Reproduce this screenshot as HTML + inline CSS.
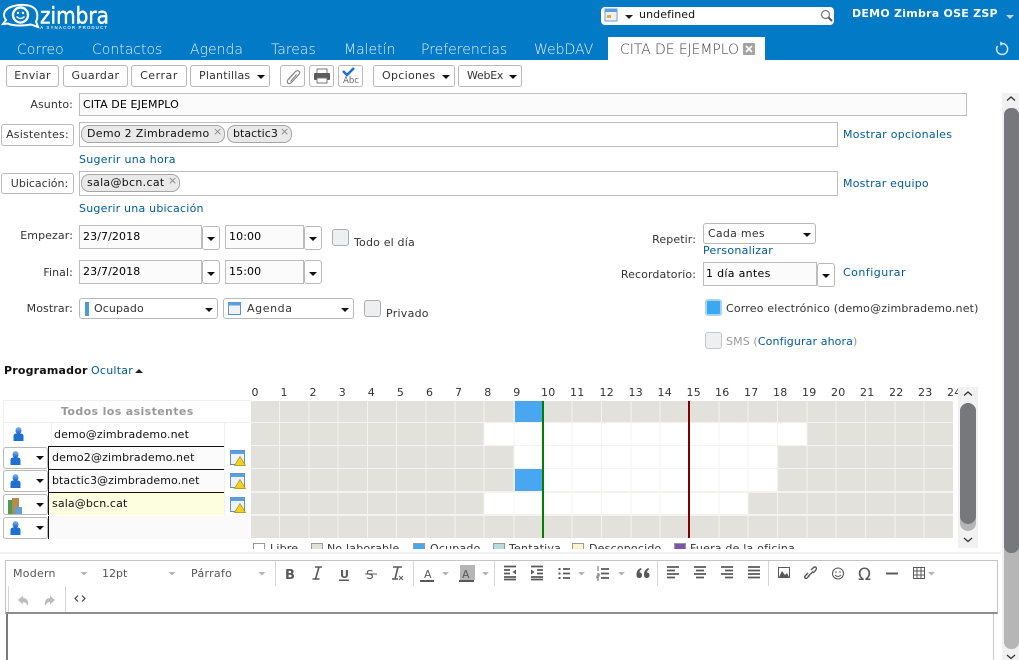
<!DOCTYPE html>
<html><head><meta charset="utf-8"><style>
html,body{margin:0;padding:0;width:1019px;height:660px;overflow:hidden;background:#fff}
body{position:relative;font-family:"DejaVu Sans",sans-serif;font-size:11px;letter-spacing:.1px;color:#333}
.a,.t,.b,.i,.l,.c{position:absolute;box-sizing:border-box}
.t{white-space:nowrap;line-height:16px;height:16px}
.l{white-space:nowrap;line-height:16px;height:16px;color:#005a95;letter-spacing:.27px}
.r{text-align:right;width:100px}
.b{background:#fff;border:1px solid #b9b9b9;border-radius:3px;text-align:center;white-space:nowrap;line-height:19px;letter-spacing:.3px}
.i{background:#fbfbfb;border:1px solid #bdbdbd;white-space:nowrap;color:#000;line-height:22px;padding-left:3px}
.c{width:17px;height:17px;background:#eeeff1;border:1px solid #aeaeae;border-radius:3px}
.bub{position:absolute;box-sizing:border-box;height:18px;top:2px;background:#e9e9e9;border:1px solid #a5a5a5;border-radius:8px;line-height:16px;padding-left:5px;color:#111;white-space:nowrap;letter-spacing:.3px}
.x{position:absolute;top:-1px;line-height:14px;color:#8a8a8a;font-size:11px;letter-spacing:0}
.d{position:absolute;width:0;height:0;border-left:4px solid transparent;border-right:4px solid transparent;border-top:4px solid #111}
.tab{position:absolute;top:41px;color:#e3f0f9;font-size:14px;letter-spacing:0;line-height:18px;white-space:nowrap;font-weight:200}
.lg{position:absolute;top:543px;width:12px;height:12px;box-sizing:border-box;border:1px solid #999}
.clip{position:absolute;left:0;top:0;width:1019px;height:549px;overflow:hidden}
.clip .t{letter-spacing:.2px}
</style></head><body>

<!-- header -->
<div class="a" style="left:0;top:0;width:1019px;height:60px;background:#027ac5"></div>
<svg class="a" style="left:0;top:0" width="125" height="34" viewBox="0 0 125 34">
<path d="M36 21.500L38 27 31 24.500C24 26 12 26 8 23.500L3 24 6 20C2 15 4 9 12 6.500C20 4 30 4.500 34 8C38 11 38 18 36 21.500Z" fill="none" stroke="#fff" stroke-width="2"/>
<circle cx="20.500" cy="15" r="7.500" fill="#027ac5" stroke="#fff" stroke-width="2.400"/>
<circle cx="18" cy="13" r="1.200" fill="#fff"/><circle cx="23" cy="13" r="1.200" fill="#fff"/>
<path d="M16.500 16.500Q20.500 20.500 24.500 16.500" fill="none" stroke="#fff" stroke-width="1.400"/>
<text x="40" y="23.500" fill="#fff" stroke="#fff" stroke-width=".5" font-family="DejaVu Sans,sans-serif" font-size="23" textLength="69" lengthAdjust="spacingAndGlyphs" letter-spacing="0">zimbra</text>
<text x="40" y="29" fill="#d6e9f6" font-family="Liberation Sans,sans-serif" font-size="4.500" font-weight="bold" textLength="67" letter-spacing="0">A SYNACOR PRODUCT</text>
</svg>

<div class="a" style="left:601px;top:7px;width:233px;height:18px;background:#fff;border-radius:4px"></div>
<svg class="a" style="left:604px;top:8px" width="16" height="16"><rect x="1" y="1" width="12" height="12" fill="#eef2f6" stroke="#6d9fd0"/><rect x="1" y="1" width="12" height="3" fill="#5c9ee0"/><rect x="3" y="7" width="4" height="3" fill="#f2a533"/></svg>
<div class="d" style="left:625px;top:15px;border-top-color:#222"></div>
<div class="t" style="left:639px;top:7px;color:#111">undefined</div>
<svg class="a" style="left:820px;top:9px" width="14" height="14"><circle cx="5.500" cy="5.500" r="4" fill="none" stroke="#777" stroke-width="1.200"/><path d="M8.500 8.500L12 12" stroke="#555" stroke-width="2"/></svg>
<div class="t" style="left:852px;top:6px;color:#fff;font-weight:bold;letter-spacing:.25px">DEMO Zimbra OSE ZSP</div>
<div class="d" style="left:1006px;top:15px;border-top-color:#bcd9ee"></div>

<div class="a" style="left:608px;top:37px;width:157px;height:23px;background:#fff"></div>
<div class="tab" style="left:17px">Correo</div>
<div class="tab" style="left:92px">Contactos</div>
<div class="tab" style="left:190px">Agenda</div>
<div class="tab" style="left:271px">Tareas</div>
<div class="tab" style="left:344px">Maletín</div>
<div class="tab" style="left:421px">Preferencias</div>
<div class="tab" style="left:534px">WebDAV</div>
<div class="tab" style="left:620px;color:#444;letter-spacing:-.08px">CITA DE EJEMPLO</div>
<svg class="a" style="left:742px;top:42px" width="14" height="14"><rect x="1" y="1" width="12" height="12" rx="1" fill="#a3a3a3"/><path d="M4 4L10 10M10 4L4 10" stroke="#fff" stroke-width="1.600"/></svg>
<svg class="a" style="left:994px;top:41px" width="16" height="16"><path d="M8 2.500A5.500 5.500 0 1 1 3.500 5" fill="none" stroke="#d5e8f5" stroke-width="1.500"/><path d="M6 0.500L9.500 2.500 6.500 5Z" fill="#d5e8f5"/></svg>

<!-- toolbar -->
<div class="b" style="left:6px;top:65px;width:53px;height:22px">Enviar</div>
<div class="b" style="left:63px;top:65px;width:65px;height:22px;letter-spacing:.45px">Guardar</div>
<div class="b" style="left:131px;top:65px;width:56px;height:22px;letter-spacing:.55px">Cerrar</div>
<div class="b" style="left:190px;top:65px;width:80px;height:22px;text-align:left;padding-left:8px;letter-spacing:.2px">Plantillas</div><div class="d" style="left:257px;top:75px"></div>
<div class="b" style="left:280px;top:65px;width:25px;height:22px"></div>
<div class="b" style="left:309px;top:65px;width:25px;height:22px"></div>
<div class="b" style="left:338px;top:65px;width:25px;height:22px"></div>
<svg class="a" style="left:284px;top:67px" width="18" height="18"><path d="M4.500 12.500L11.500 4.500C13 3 15 3.500 15.500 5S15 7.500 14 8.500L7 16C6 17 4 17 3.500 15.500S3.500 13 4.500 12L11 5M6.500 14.500L12.500 7.500" fill="none" stroke="#888" stroke-width="1.200"/></svg>
<svg class="a" style="left:312px;top:67px" width="20" height="18"><rect x="5" y="2" width="10" height="5" fill="#fff" stroke="#777"/><rect x="2" y="6" width="16" height="7" rx="1" fill="#5c5c5c"/><rect x="5" y="11" width="10" height="5" fill="#fff" stroke="#777"/></svg>
<svg class="a" style="left:340px;top:67px" width="20" height="18"><path d="M3 4L7 8 14 1" fill="none" stroke="#1a6fd0" stroke-width="2.500"/><text x="3" y="16" font-size="8.500" letter-spacing="0" fill="#666" font-family="DejaVu Sans,sans-serif">Abc</text></svg>
<div class="b" style="left:373px;top:65px;width:82px;height:22px;text-align:left;padding-left:8px">Opciones</div><div class="d" style="left:442px;top:75px"></div>
<div class="b" style="left:458px;top:65px;width:64px;height:22px;text-align:left;padding-left:8px;letter-spacing:-.25px">WebEx</div><div class="d" style="left:509px;top:75px"></div>

<!-- form -->
<div class="t r" style="left:-27px;top:97px">Asunto:</div>
<div class="i" style="left:79px;top:93px;width:888px;height:23px">CITA DE EJEMPLO</div>

<div class="b" style="left:1px;top:124px;width:73px;height:22px;letter-spacing:.2px">Asistentes:</div>
<div class="i" style="left:79px;top:122px;width:759px;height:25px;background:#fff"></div>
<div class="a" style="left:79px;top:123px;height:20px">
<div class="bub" style="left:2px;width:144px">Demo 2 Zimbrademo<span class="x" style="left:131px">×</span></div>
<div class="bub" style="left:148px;width:65px;letter-spacing:.05px">btactic3<span class="x" style="left:52px">×</span></div></div>
<div class="l" style="left:79px;top:152px">Sugerir una hora</div>
<div class="l" style="left:843px;top:127px">Mostrar opcionales</div>

<div class="b" style="left:1px;top:173px;width:73px;height:21px;letter-spacing:0;padding-left:4px">Ubicación:</div>
<div class="i" style="left:79px;top:171px;width:759px;height:25px;background:#fff"></div>
<div class="a" style="left:79px;top:172px;height:20px">
<div class="bub" style="left:2px;width:99px">sala@bcn.cat<span class="x" style="left:86px">×</span></div></div>
<div class="l" style="left:79px;top:201px;letter-spacing:.22px">Sugerir una ubicación</div>
<div class="l" style="left:843px;top:176px;letter-spacing:.2px">Mostrar equipo</div>

<div class="t r" style="left:-27px;top:228px">Empezar:</div>
<div class="i" style="left:79px;top:225px;width:123px;height:24px">23/7/2018</div>
<div class="b" style="left:202px;top:226px;width:18px;height:24px"></div><div class="d" style="left:207px;top:237px"></div>
<div class="i" style="left:225px;top:225px;width:79px;height:24px">10:00</div>
<div class="b" style="left:304px;top:226px;width:18px;height:24px"></div><div class="d" style="left:309px;top:237px"></div>
<div class="c" style="left:332px;top:229px"></div>
<div class="t" style="left:354px;top:235px;letter-spacing:.18px">Todo el día</div>

<div class="t r" style="left:-27px;top:265px;font-variant-ligatures:common-ligatures">Final:</div>
<div class="i" style="left:79px;top:260px;width:123px;height:24px">23/7/2018</div>
<div class="b" style="left:202px;top:260px;width:18px;height:24px"></div><div class="d" style="left:207px;top:272px"></div>
<div class="i" style="left:225px;top:260px;width:79px;height:24px">15:00</div>
<div class="b" style="left:304px;top:260px;width:18px;height:24px"></div><div class="d" style="left:309px;top:272px"></div>

<div class="t r" style="left:-27px;top:301px">Mostrar:</div>
<div class="b" style="left:79px;top:298px;width:139px;height:21px;text-align:left;padding-left:14px;letter-spacing:.1px">Ocupado</div>
<div class="a" style="left:85px;top:302px;width:4px;height:14px;background:#4a9ad8"></div>
<div class="d" style="left:205px;top:308px"></div>
<div class="b" style="left:223px;top:298px;width:131px;height:21px;text-align:left;padding-left:23px;letter-spacing:.6px">Agenda</div>
<svg class="a" style="left:228px;top:302px" width="13" height="13"><rect x=".5" y=".5" width="12" height="12" fill="#eef3f8" stroke="#5e90c4"/><rect x=".5" y=".5" width="12" height="3" fill="#5c9ee0"/></svg>
<div class="d" style="left:341px;top:308px"></div>
<div class="c" style="left:364px;top:300px"></div>
<div class="t" style="left:386px;top:306px;letter-spacing:.26px">Privado</div>

<div class="t" style="left:596px;top:232px;width:100px;text-align:right">Repetir:</div>
<div class="b" style="left:703px;top:223px;width:113px;height:21px;text-align:left;padding-left:4px;letter-spacing:.25px">Cada mes</div><div class="d" style="left:803px;top:233px"></div>
<div class="l" style="left:703px;top:243px">Personalizar</div>
<div class="t" style="left:596px;top:267px;width:100px;text-align:right">Recordatorio:</div>
<div class="i" style="left:703px;top:262px;width:114px;height:24px;padding-left:2px;letter-spacing:.3px">1 día antes</div>
<div class="b" style="left:817px;top:263px;width:18px;height:24px"></div><div class="d" style="left:822px;top:274px"></div>
<div class="l" style="left:843px;top:265px;letter-spacing:.5px">Configurar</div>
<div class="c" style="left:705px;top:299px;background:#3aa9ef;border:2px solid #a9d3f0"></div>
<div class="t" style="left:726px;top:301px;letter-spacing:.18px">Correo electrónico (demo@zimbrademo.net)</div>
<div class="c" style="left:705px;top:332px;border-color:#c8c8c8"></div>
<div class="t" style="left:726px;top:334px;color:#999;letter-spacing:.12px">SMS (<span style="color:#005a95">Configurar ahora</span>)</div>

<div class="t" style="left:4px;top:363px;font-weight:bold;color:#111;letter-spacing:.19px">Programador</div>
<div class="l" style="left:91px;top:363px;letter-spacing:.25px">Ocultar</div>
<div class="a" style="left:135px;top:369px;width:0;height:0;border-left:4px solid transparent;border-right:4px solid transparent;border-bottom:4px solid #222"></div>

<div class="clip">
<!-- legend -->
<div class="lg" style="left:253px;background:#fff"></div><div class="t" style="left:270px;top:541px">Libre</div>
<div class="lg" style="left:311px;background:#e2e1db"></div><div class="t" style="left:327px;top:541px">No laborable</div>
<div class="lg" style="left:413px;background:#4ba6f2"></div><div class="t" style="left:430px;top:541px">Ocupado</div>
<div class="lg" style="left:493px;background:#b5dedd"></div><div class="t" style="left:509px;top:541px">Tentativa</div>
<div class="lg" style="left:572px;background:#fdf3cd"></div><div class="t" style="left:589px;top:541px">Desconocido</div>
<div class="lg" style="left:674px;background:#7b55ab"></div><div class="t" style="left:690px;top:541px">Fuera de la oficina</div>
</div>
<div class="a" style="left:0;top:552px;width:1001px;height:2px;background:#f1f1f1"></div>

<!-- scheduler grid -->
<svg class="a" style="left:0;top:385px" width="1000" height="160" viewBox="0 385 1000 160" font-family="DejaVu Sans,sans-serif" font-size="11" fill="#333" letter-spacing=".3">
<text x="251.500" y="396">0</text><text x="280.500" y="396">1</text><text x="309.500" y="396">2</text><text x="338.700" y="396">3</text><text x="367.800" y="396">4</text><text x="396.900" y="396">5</text><text x="426" y="396">6</text><text x="455" y="396">7</text><text x="484.200" y="396">8</text><text x="513.300" y="396">9</text>
<text x="541" y="396">10</text><text x="570" y="396">11</text><text x="599.500" y="396">12</text><text x="628.500" y="396">13</text><text x="657.500" y="396">14</text><text x="686.500" y="396">15</text><text x="715" y="396">16</text><text x="744" y="396">17</text><text x="773" y="396">18</text><text x="802" y="396">19</text><text x="831" y="396">20</text><text x="860" y="396">21</text><text x="889" y="396">22</text><text x="918" y="396">23</text><text x="947" y="396">24</text>
<rect x="251" y="401" width="702" height="137" fill="#f3f3f2"/>
<g fill="#e2e1db">
<rect x="251" y="401" width="702" height="21"/><rect x="251" y="423" width="702" height="22"/><rect x="251" y="446" width="702" height="22"/><rect x="251" y="469" width="702" height="22"/><rect x="251" y="493" width="702" height="21"/><rect x="251" y="516" width="702" height="22"/>
</g>
<g fill="#fff">
<rect x="484" y="423" width="323" height="22"/><rect x="514" y="446" width="263" height="22"/><rect x="543" y="469" width="234" height="22"/><rect x="484" y="493" width="264" height="21"/>
</g>
<rect x="515" y="401" width="28" height="21" fill="#4ba6f2"/><rect x="515" y="469" width="28" height="22" fill="#4ba6f2"/>
<path d="M279.500 401V538M309 401V538M338 401V538M367.500 401V538M396.500 401V538M426 401V538M455 401V538M484 401V538M514 401V538M572 401V538M601.500 401V538M631 401V538M660 401V538M689.500 401V538M719 401V538M748 401V538M777.500 401V538M807 401V538M836 401V538M865.500 401V538M895 401V538M924 401V538" stroke="#f3f3f1" stroke-width="1" fill="none"/>
<rect x="542" y="401" width="2" height="137" fill="#008000"/><rect x="688" y="401" width="2" height="137" fill="#800000"/>
</svg>

<!-- scheduler left -->
<div class="a" style="left:3px;top:400px;width:248px;height:139px;border:1px solid #f0f0f0;border-right:none"></div>
<div class="a" style="left:3px;top:422px;width:248px;height:1px;background:#f0f0f0"></div>
<div class="a" style="left:51px;top:423px;width:1px;height:23px;background:#f0f0f0"></div>
<div class="a" style="left:224px;top:423px;width:1px;height:115px;background:#f0f0f0"></div>
<div class="t" style="left:61px;top:404px;font-weight:bold;color:#999;letter-spacing:.37px">Todos los asistentes</div>
<div class="t" style="left:54px;top:427px;color:#111;letter-spacing:.13px">demo@zimbrademo.net</div>

<div class="a" style="left:48px;top:446px;width:176px;height:23px;background:#fbfbfb;border-top:1px solid #111;border-left:1px solid #111"></div>
<div class="a" style="left:48px;top:469px;width:176px;height:23px;background:#fbfbfb;border-top:1px solid #111;border-left:1px solid #111"></div>
<div class="a" style="left:48px;top:492px;width:176px;height:23px;background:#fdfde0;border-top:1px solid #111;border-left:1px solid #111"></div>
<div class="a" style="left:48px;top:516px;width:176px;height:23px;background:#fafafa;border-left:1px solid #111"></div>
<div class="a" style="left:224px;top:516px;width:27px;height:23px;background:#fafafa"></div>
<div class="t" style="left:52px;top:450px;color:#111;letter-spacing:.15px">demo2@zimbrademo.net</div>
<div class="t" style="left:52px;top:473px;color:#111;letter-spacing:.07px">btactic3@zimbrademo.net</div>
<div class="t" style="left:52px;top:496px;color:#111;letter-spacing:.13px">sala@bcn.cat</div>

<div class="b" style="left:3px;top:447px;width:45px;height:22px"></div><div class="d" style="left:36px;top:456px"></div>
<div class="b" style="left:3px;top:470px;width:45px;height:22px"></div><div class="d" style="left:36px;top:479px"></div>
<div class="b" style="left:3px;top:494px;width:45px;height:21px"></div><div class="d" style="left:36px;top:503px"></div>
<div class="b" style="left:3px;top:517px;width:45px;height:22px"></div><div class="d" style="left:36px;top:526px"></div>

<svg class="a" style="left:0;top:420px" width="251" height="120" viewBox="0 420 251 120">
<defs>
<linearGradient id="pg" x1="0" y1="0" x2="0" y2="1"><stop offset="0" stop-color="#8fbdec"/><stop offset=".45" stop-color="#4e92e0"/><stop offset="1" stop-color="#1560c4"/></linearGradient>
<g id="p"><ellipse cx="5.500" cy="3.500" rx="3" ry="3.500" fill="url(#pg)"/><path d="M.5 14V9Q.5 6.500 3.500 6.500H7.500Q10.500 6.500 10.500 9V14Z" fill="#1f6fd0"/></g>
<g id="w"><rect x=".5" y=".5" width="14" height="14" fill="#eef3f8" stroke="#5e90c4"/><rect x=".5" y=".5" width="14" height="3.500" fill="#5c9ee0"/><path d="M10 6.500L15.500 15.500H4.500Z" fill="#f4d020" stroke="#a58b10" stroke-width=".7"/></g>
</defs>
<use href="#p" x="13" y="427"/><use href="#p" x="10" y="451"/><use href="#p" x="10" y="474"/><use href="#p" x="10" y="521"/>
<rect x="8" y="500" width="6" height="14" fill="#4d9b4c"/><rect x="12" y="498" width="7" height="16" fill="#b58b4d"/><rect x="15" y="507" width="7" height="7" fill="#5fa0dc"/>
<use href="#w" x="230" y="450"/><use href="#w" x="230" y="473"/><use href="#w" x="230" y="497"/>
</svg>

<!-- inner scrollbar -->
<div class="a" style="left:958px;top:387px;width:20px;height:161px;background:#f1f1f1"></div>
<div class="a" style="left:960px;top:403px;width:16px;height:128px;background:#b6b6b6;border-radius:8px"></div>
<div class="a" style="left:960px;top:403px;width:16px;height:121px;background:#76787c;border-radius:8px"></div>
<svg class="a" style="left:962px;top:390px" width="12" height="8"><path d="M2 5.500L6 2 10 5.500" fill="none" stroke="#333" stroke-width="1.300"/></svg>
<svg class="a" style="left:962px;top:536px" width="12" height="8"><path d="M2 2L6 5.500 10 2" fill="none" stroke="#333" stroke-width="1.300"/></svg>

<!-- outer scrollbar -->
<div class="a" style="left:1002px;top:93px;width:17px;height:567px;background:#f1f1f1"></div>
<div class="a" style="left:1004px;top:108px;width:15px;height:541px;background:#b6b6b6;border-radius:7px"></div>
<div class="a" style="left:1004px;top:108px;width:15px;height:445px;background:#76787c;border-radius:7px"></div>
<svg class="a" style="left:1005px;top:95px" width="12" height="8"><path d="M2 5.500L6 2 10 5.500" fill="none" stroke="#333" stroke-width="1.300"/></svg>
<svg class="a" style="left:1005px;top:653px" width="12" height="8"><path d="M2 2L6 5.500 10 2" fill="none" stroke="#333" stroke-width="1.300"/></svg>

<!-- editor -->
<div class="a" style="left:5px;top:560px;width:993px;height:54px;border:1px solid #c4c4c4;border-bottom:2px solid #8e8e8e"></div>
<div class="a" style="left:6px;top:614px;width:988px;height:46px;border-left:2px solid #7a7a7a;border-right:1px solid #c8c8c8;background:#fff"></div>
<div class="t" style="left:13px;top:566px;color:#555;letter-spacing:.25px">Modern</div>
<div class="t" style="left:102px;top:566px;color:#555;letter-spacing:0">12pt</div>
<div class="t" style="left:191px;top:566px;color:#555;letter-spacing:.3px">Párrafo</div>

<svg class="a" style="left:0;top:556px" width="1000" height="60" viewBox="0 556 1000 60" font-family="Liberation Serif,serif" fill="#595959">
<g fill="#b5b5b5"><path d="M80.500 572h7l-3.500 3.500zM168.500 572h7l-3.500 3.500zM258.500 572h7l-3.500 3.500zM442 572h7l-3.500 3.500zM482 572h7l-3.500 3.500zM578 572h7l-3.500 3.500zM618 572h7l-3.500 3.500zM928 572h7l-3.500 3.500z"/></g>
<g stroke="#d6d6d6" stroke-width="1"><path d="M275.500 561V586M413.500 561V586M494.500 561V586M657.500 561V586M768.500 561V586M8.500 586V612M65.500 586V612"/></g>
<rect x="460" y="565" width="15" height="15" fill="#b5b5b5"/>
<text x="285" y="579" font-family="DejaVu Sans,sans-serif" font-size="13" font-weight="bold" letter-spacing="0">B</text>
<path d="M315 567H322M312.500 579H319.500M319 567L315.500 579" stroke="#595959" stroke-width="1.600" fill="none"/>
<text x="340" y="578" font-family="DejaVu Sans,sans-serif" font-size="11" font-weight="bold" letter-spacing="0">U</text><rect x="339" y="579.500" width="10" height="1.500"/>
<text x="366" y="579" font-family="DejaVu Sans,sans-serif" font-size="12" letter-spacing="0">S</text><rect x="365" y="573.500" width="12" height="1"/>
<path d="M393 567H402M392 579H398M398 567L395 579" stroke="#595959" stroke-width="1.600" fill="none"/><path d="M399 576l4 4M403 576l-4 4" stroke="#595959" fill="none"/>
<text x="424" y="578" font-family="DejaVu Sans,sans-serif" font-size="11" letter-spacing="0">A</text><rect x="420" y="580" width="14" height="2"/>
<text x="462" y="578" font-family="DejaVu Sans,sans-serif" font-size="11" letter-spacing="0">A</text><rect x="459" y="580" width="15" height="2"/>
<path d="M504 566.500H516M504 570H510M504 573.500H510M504 577H516M504 579.500H516" stroke="#595959" stroke-width="1.700" fill="none"/><path d="M516 569.500V574.500L512.500 572Z"/>
<path d="M531 566.500H543M537 570H543M537 573.500H543M531 577H543M531 579.500H543" stroke="#595959" stroke-width="1.700" fill="none"/><path d="M531 569.500V574.500L534.500 572Z"/>
<path d="M563 569H570M563 573.500H570M563 578H570" stroke="#595959" stroke-width="1.700" fill="none"/><rect x="558.500" y="568" width="2" height="2"/><rect x="558.500" y="572.500" width="2" height="2"/><rect x="558.500" y="577" width="2" height="2"/>
<path d="M601 569H609M601 573.500H609M601 578H609" stroke="#595959" stroke-width="1.700" fill="none"/><path d="M598 566V571M597 574H599V576H597V578H599M597 580H599" stroke="#595959" stroke-width=".9" fill="none"/>
<path d="M641 568C638 569 636.500 571 636.500 574.500C636.500 577 637.500 578 639 578C641 578 642 577 642 575C642 573.500 641 572.500 639.500 572.500C639.500 571 640.500 570 641.500 569.500ZM648.500 568C645.500 569 644 571 644 574.500C644 577 645 578 646.500 578C648.500 578 649.500 577 649.500 575C649.500 573.500 648.500 572.500 647 572.500C647 571 648 570 649 569.500Z"/>
<path d="M667 567H679M667 570.500H675M667 574H679M667 577.500H675" stroke="#595959" stroke-width="1.800" fill="none"/>
<path d="M694 567H706M696 570.500H704M694 574H706M696 577.500H704" stroke="#595959" stroke-width="1.800" fill="none"/>
<path d="M721 567H733M725 570.500H733M721 574H733M725 577.500H733" stroke="#595959" stroke-width="1.800" fill="none"/>
<path d="M748 567H760M748 570.500H760M748 574H760M748 577.500H760" stroke="#595959" stroke-width="1.800" fill="none"/>
<rect x="778.500" y="567.500" width="11" height="10" fill="#fff" stroke="#595959"/><path d="M779 577L782 571 785 575 787 573 789 577Z"/>
<path d="M809 575L814 570M812 568.500L814.500 566Q816 565 817 566T816.500 569L814 571.500M810.500 574L808 576.500Q807 577.500 806 576.500T806.500 574L809 571.500" fill="none" stroke="#595959" stroke-width="1.400" transform="translate(-1,1.500)"/>
<circle cx="838" cy="573.500" r="5.500" fill="none" stroke="#595959" stroke-width="1.100"/><circle cx="836" cy="572" r=".8"/><circle cx="840" cy="572" r=".8"/><path d="M835 575Q838 578 841 575" fill="none" stroke="#595959"/>
<text x="858" y="580" font-family="DejaVu Sans,sans-serif" font-size="17" letter-spacing="0">Ω</text>
<rect x="886" y="572.500" width="12" height="2"/>
<path d="M913.500 567.500H924.500V578.500H913.500ZM913.500 571H924.500M913.500 575H924.500M917 567.500V578.500M921 567.500V578.500" fill="none" stroke="#595959"/>
<path d="M18 600L23 595.500V598Q29 598 28 606Q26 602 23 602V604.500Z" fill="#bdbdbd"/>
<path d="M55 600L50 595.500V598Q44 598 45 606Q47 602 50 602V604.500Z" fill="#bdbdbd"/>
<path d="M78 595.500L75 598.500 78 601.500M82 595.500L85 598.500 82 601.500" fill="none" stroke="#444" stroke-width="1.200"/>
</svg>
</body></html>
